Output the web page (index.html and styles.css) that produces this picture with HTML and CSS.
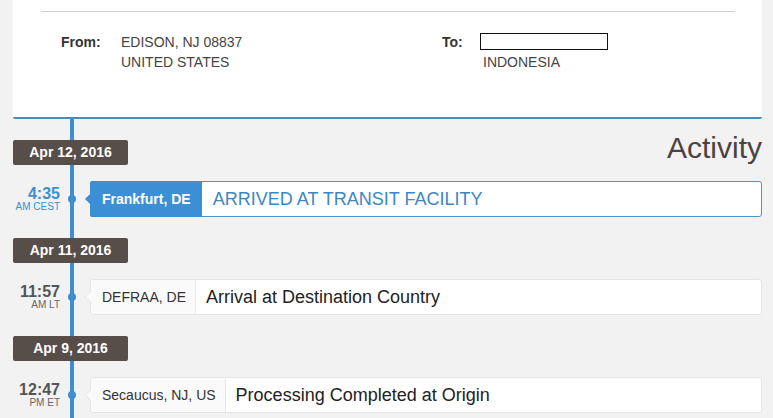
FILE: index.html
```html
<!DOCTYPE html>
<html>
<head>
<meta charset="utf-8">
<link rel="stylesheet" href="styles.css">
</head>
<body>
<div class="page">
  <section class="card">
    <div class="rule"></div>
    <div class="addresses">
      <div class="label">From:</div>
      <div class="value">EDISON, NJ 08837<br>UNITED STATES</div>
      <div class="label">To:</div>
      <div class="value"><div class="blank"></div><span class="country">INDONESIA</span></div>
    </div>
  </section>

  <section class="timeline">
    <div class="group">
      <div class="group-head">
        <div class="date">Apr 12, 2016</div>
        <h2 class="heading">Activity</h2>
      </div>
      <div class="event current">
        <div class="time"><span class="clock">4:35</span><span class="zone">AM CEST</span></div>
        <div class="dot"></div>
        <div class="box">
          <div class="loc">Frankfurt, DE</div>
          <div class="desc">ARRIVED AT TRANSIT FACILITY</div>
        </div>
      </div>
    </div>

    <div class="group">
      <div class="group-head">
        <div class="date">Apr 11, 2016</div>
      </div>
      <div class="event">
        <div class="time"><span class="clock">11:57</span><span class="zone">AM LT</span></div>
        <div class="dot"></div>
        <div class="box">
          <div class="loc">DEFRAA, DE</div>
          <div class="desc">Arrival at Destination Country</div>
        </div>
      </div>
    </div>

    <div class="group">
      <div class="group-head">
        <div class="date">Apr 9, 2016</div>
      </div>
      <div class="event">
        <div class="time"><span class="clock">12:47</span><span class="zone">PM ET</span></div>
        <div class="dot"></div>
        <div class="box">
          <div class="loc">Secaucus, NJ, US</div>
          <div class="desc">Processing Completed at Origin</div>
        </div>
      </div>
    </div>
  </section>
</div>
</body>
</html>
```

FILE: styles.css
```css
* { box-sizing: border-box; }

html, body {
  margin: 0;
  padding: 0;
  background: #f2f2f2;
  font-family: "Liberation Sans", Arial, sans-serif;
  color: #333;
  overflow: hidden;
}

.page {
  padding: 0 11px 0 13px;
}

.card {
  background: #fff;
  border-bottom: 2px solid #4b8cb8;
  border-radius: 0 0 2px 2px;
  padding: 11px 27px 0 28px;
  height: 119px;
}

.rule {
  border-top: 1px solid #cfcfcf;
}

.addresses {
  display: grid;
  grid-template-columns: 60px 321px 38px 1fr;
  padding: 20px 0 0 20px;
  font-size: 14px;
  line-height: 20px;
}

.label {
  font-weight: bold;
  color: #333;
}

.value {
  color: #444;
}

.country {
  padding-left: 3px;
}

.blank {
  width: 128px;
  height: 17px;
  border: 1px solid #111;
  margin: 1px 0 2px;
}

.timeline {
  position: relative;
  padding-top: 21px;
  height: 299px;
}

.timeline::before {
  content: "";
  position: absolute;
  left: 57px;
  top: 0;
  bottom: 0;
  width: 4px;
  background: #3d8fd1;
}

.group {
  position: relative;
  margin-bottom: 21px;
}

.group:last-child {
  margin-bottom: 0;
}

.group-head {
  display: flex;
  justify-content: space-between;
  align-items: center;
  height: 25px;
  margin-bottom: 16px;
}

.date {
  position: relative;
  width: 115px;
  height: 25px;
  line-height: 25px;
  background: #574d49;
  color: #fff;
  font-weight: bold;
  font-size: 14px;
  text-align: center;
  border-radius: 2px;
}

.heading {
  margin: 0 0 9px;
  font-weight: normal;
  font-size: 30px;
  line-height: 32px;
  color: #4b4242;
}

.event {
  display: flex;
  align-items: center;
  height: 36px;
}

.time {
  width: 47px;
  display: flex;
  flex-direction: column;
  align-items: flex-end;
  color: #555;
  padding-top: 1px;
}

.clock {
  font-weight: bold;
  font-size: 16px;
  line-height: 15px;
}

.zone {
  font-size: 10px;
  line-height: 12px;
  color: #666;
}

.dot {
  position: relative;
  width: 8px;
  height: 8px;
  border-radius: 50%;
  background: #3d8fd1;
  margin: 0 14px 0 8px;
}

.box {
  position: relative;
  flex: 1;
  display: flex;
  align-items: stretch;
  height: 36px;
  background: #fff;
  border: 1px solid #e6e6e6;
  border-radius: 3px;
}

.box::before {
  content: "";
  position: absolute;
  left: -6px;
  top: 11px;
  border-style: solid;
  border-width: 6px 6px 6px 0;
  border-color: transparent #e6e6e6 transparent transparent;
}

.box::after {
  content: "";
  position: absolute;
  left: -5px;
  top: 12px;
  border-style: solid;
  border-width: 5px 5px 5px 0;
  border-color: transparent #fafafa transparent transparent;
}

.loc {
  display: flex;
  align-items: center;
  padding: 0 9px 0 11px;
  background: #fafafa;
  border-right: 1px solid #e8e8e8;
  font-size: 14px;
  color: #333;
  border-radius: 2px 0 0 2px;
}

.desc {
  display: flex;
  align-items: center;
  padding: 0 10px;
  font-size: 18px;
  color: #222;
}

.current .clock,
.current .zone {
  color: #3d8fd1;
}

.current .box {
  border-color: #4f93c9;
}

.current .box::before {
  border-right-color: #3b8fd5;
}

.current .box::after {
  border-right-color: #3b8fd5;
}

.current .loc {
  background: #3b8fd5;
  border-right-color: #3b8fd5;
  color: #fff;
  font-weight: bold;
  margin: -1px 0 -1px -1px;
  padding-left: 12px;
  padding-right: 10px;
}

.current .desc {
  color: #3b86c6;
  padding-left: 11px;
}
```
